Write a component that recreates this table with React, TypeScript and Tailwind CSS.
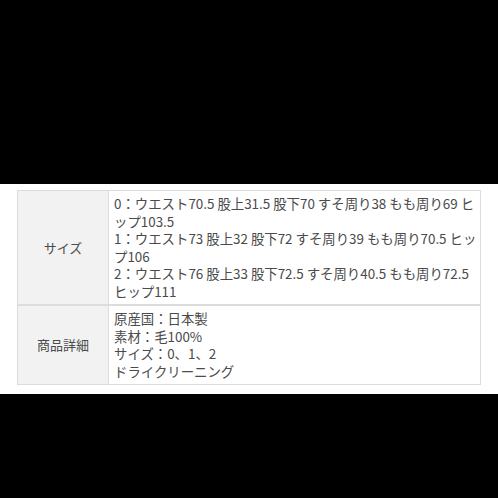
const font = { fontFamily: '"Noto Sans CJK JP", "Noto Sans", sans-serif' };

const rows = [
  {
    label: 'サイズ',
    lines: [
      '0：ウエスト70.5 股上31.5 股下70 すそ周り38 もも周り69 ヒ',
      'ップ103.5',
      '1：ウエスト73 股上32 股下72 すそ周り39 もも周り70.5 ヒッ',
      'プ106',
      '2：ウエスト76 股上33 股下72.5 すそ周り40.5 もも周り72.5',
      'ヒップ111',
    ],
  },
  {
    label: '商品詳細',
    lines: ['原産国：日本製', '素材：毛100%', 'サイズ：0、1、2', 'ドライクリーニング'],
  },
];

export default function App() {
  return (
    <div className="h-[498px] w-[498px] bg-black pt-[184px]" style={font}>
      <div className="bg-white px-[17px] pt-[6px] pb-[9px]">
        <div className="border border-[#dcdcdc] text-[13.4px] leading-[17.5px] text-[#4a4a4a]">
          {rows.map((row, i) => (
            <div
              key={row.label}
              className={`grid grid-cols-[91px_1fr] ${i > 0 ? 'border-t-2 border-[#dcdcdc]' : ''}`}
            >
              <div className="flex items-center justify-center border-r border-[#dcdcdc] bg-[#f2f2f2] text-[13px]">
                {row.label}
              </div>
              <div className="py-[4px] pl-[5px]">
                {row.lines.map((l) => (
                  <div key={l} className="whitespace-nowrap">{l}</div>
                ))}
              </div>
            </div>
          ))}
        </div>
      </div>
    </div>
  );
}
